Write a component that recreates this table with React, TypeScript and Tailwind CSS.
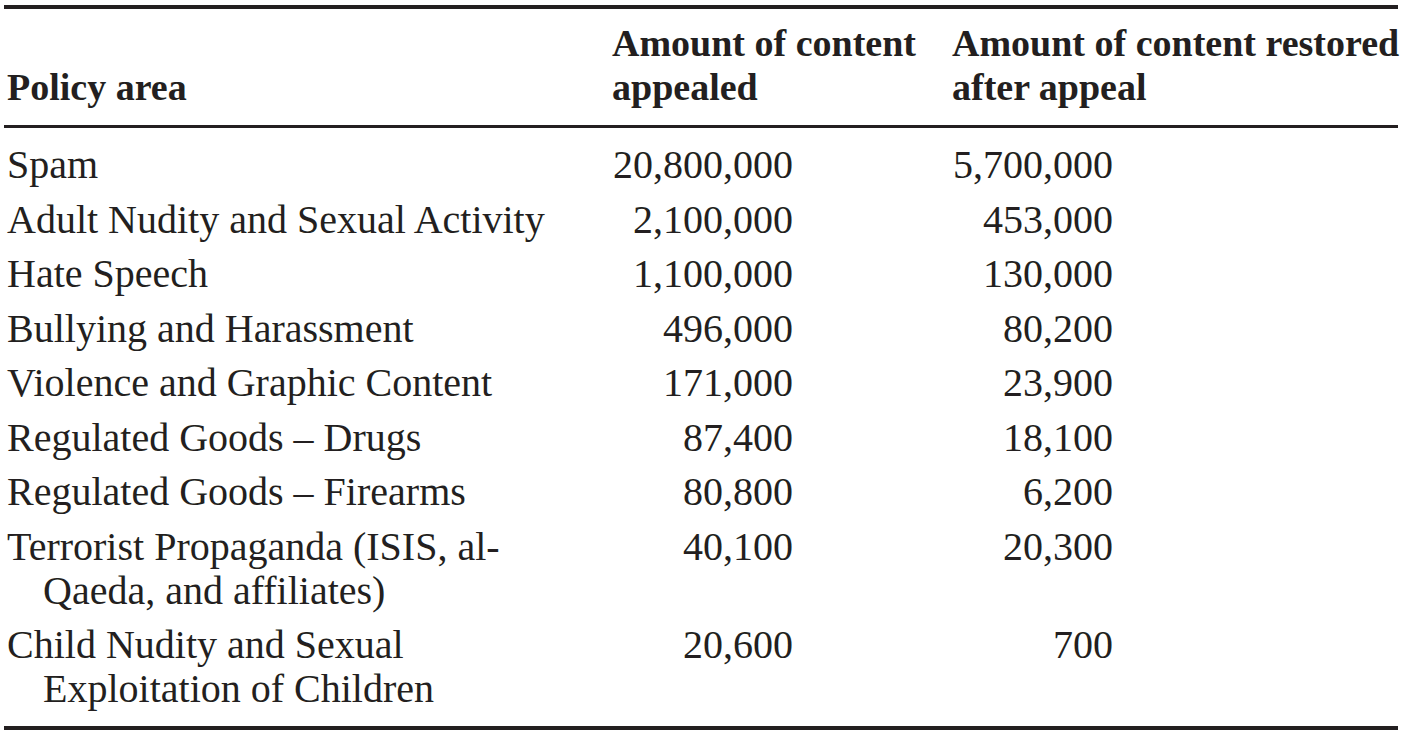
const rows: Array<{ area: string[]; appealed: string; restored: string }> = [
  { area: ["Spam"], appealed: "20,800,000", restored: "5,700,000" },
  { area: ["Adult Nudity and Sexual Activity"], appealed: "2,100,000", restored: "453,000" },
  { area: ["Hate Speech"], appealed: "1,100,000", restored: "130,000" },
  { area: ["Bullying and Harassment"], appealed: "496,000", restored: "80,200" },
  { area: ["Violence and Graphic Content"], appealed: "171,000", restored: "23,900" },
  { area: ["Regulated Goods – Drugs"], appealed: "87,400", restored: "18,100" },
  { area: ["Regulated Goods – Firearms"], appealed: "80,800", restored: "6,200" },
  { area: ["Terrorist Propaganda (ISIS, al-", "Qaeda, and affiliates)"], appealed: "40,100", restored: "20,300" },
  { area: ["Child Nudity and Sexual", "Exploitation of Children"], appealed: "20,600", restored: "700" },
];

export default function App() {
  return (
    <div className="h-[734px] w-[1405px] bg-white pt-[5px] pl-[4px] pr-[7px] font-['Liberation_Serif',serif] leading-[44px] text-[#231f20]">
      <div className="border-t-4 border-b-4 border-[#231f20]">
        <div className="grid grid-cols-[608px_340px_1fr] items-end whitespace-nowrap border-b-[3px] border-[#231f20] pt-[12px] pb-[16px] text-[38px] font-semibold">
          <div className="pl-[3px]">Policy area</div>
          <div>
            Amount of content
            <br />
            appealed
          </div>
          <div>
            Amount of content restored
            <br />
            after appeal
          </div>
        </div>
        <div className="pt-[10px] pb-[9px] text-[40px]">
          {rows.map((row) => (
            <div key={row.area[0]} className="grid grid-cols-[608px_340px_1fr] py-[5.25px]">
              <div className="pl-[3px]">
                {row.area.map((line, i) => (
                  <div key={line} className={i > 0 ? "pl-[36px]" : ""}>
                    {line}
                  </div>
                ))}
              </div>
              <div className="w-[181px] text-right oldstyle-nums">{row.appealed}</div>
              <div className="w-[161px] text-right oldstyle-nums">{row.restored}</div>
            </div>
          ))}
        </div>
      </div>
    </div>
  );
}
